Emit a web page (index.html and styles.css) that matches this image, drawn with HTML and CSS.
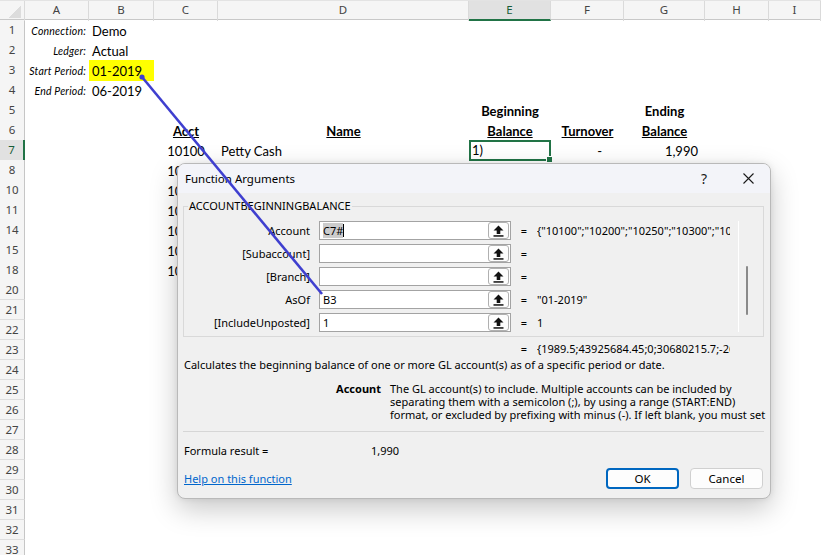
FILE: index.html
```html
<!DOCTYPE html>
<html lang="en">
<head>
    <meta charset="UTF-8">
    <title>Function Arguments</title>
    <link rel="stylesheet" href="styles.css">
</head>
<body>
    <div class="sheet">
        <div class="row colhead">
            <div class="corner"><span></span></div>
            <div class="ch">A</div>
            <div class="ch">B</div>
            <div class="ch">C</div>
            <div class="ch">D</div>
            <div class="ch on">E</div>
            <div class="ch">F</div>
            <div class="ch">G</div>
            <div class="ch">H</div>
            <div class="ch">I</div>
        </div>
        <div class="row"><div class="rh">1</div><div class="cell a lbl">Connection:</div><div class="cell b">Demo</div></div>
        <div class="row"><div class="rh">2</div><div class="cell a lbl">Ledger:</div><div class="cell b">Actual</div></div>
        <div class="row"><div class="rh">3</div><div class="cell a lbl">Start Period:</div><div class="cell b hl">01-2019</div></div>
        <div class="row"><div class="rh">4</div><div class="cell a lbl">End Period:</div><div class="cell b">06-2019</div></div>
        <div class="row"><div class="rh">5</div><div class="cell e hd">Beginning</div><div class="cell g hd">Ending</div></div>
        <div class="row">
            <div class="rh">6</div>
            <div class="cell c hd"><u>Acct</u></div>
            <div class="cell d hd"><u>Name</u></div>
            <div class="cell e hd"><u>Balance</u></div>
            <div class="cell f hd"><u>Turnover</u></div>
            <div class="cell g hd"><u>Balance</u></div>
        </div>
        <div class="row">
            <div class="rh on">7</div>
            <div class="cell c mid">10100</div>
            <div class="cell d">Petty Cash</div>
            <div class="cell e active">1)</div>
            <div class="cell f dash">-</div>
            <div class="cell g num">1,990</div>
        </div>
        <div class="row"><div class="rh">8</div><div class="cell c mid">10200</div></div>
        <div class="row"><div class="rh">10</div><div class="cell c mid">10250</div></div>
        <div class="row"><div class="rh">11</div><div class="cell c mid">10300</div></div>
        <div class="row"><div class="rh">14</div><div class="cell c mid">10400</div></div>
        <div class="row"><div class="rh">15</div><div class="cell c mid">10500</div></div>
        <div class="row"><div class="rh">18</div><div class="cell c mid">10600</div></div>
        <div class="row"><div class="rh">20</div></div>
        <div class="row"><div class="rh">21</div></div>
        <div class="row"><div class="rh">22</div></div>
        <div class="row"><div class="rh">23</div></div>
        <div class="row"><div class="rh">24</div></div>
        <div class="row"><div class="rh">25</div></div>
        <div class="row"><div class="rh">26</div></div>
        <div class="row"><div class="rh">27</div></div>
        <div class="row"><div class="rh">28</div></div>
        <div class="row"><div class="rh">29</div></div>
        <div class="row"><div class="rh">30</div></div>
        <div class="row"><div class="rh">31</div></div>
        <div class="row"><div class="rh">32</div></div>
        <div class="row"><div class="rh">33</div></div>
    </div>

    <div class="dialog">
        <div class="titlebar">
            <span class="title">Function Arguments</span>
            <span class="tb-btn help-q">?</span>
            <span class="tb-btn">
                <svg width="11" height="11" viewBox="0 0 11 11"><path d="M0.5 0.5L10.5 10.5M10.5 0.5L0.5 10.5" stroke="#1a1a1a" stroke-width="1.1" fill="none"/></svg>
            </span>
        </div>
        <div class="dlg-body">
            <fieldset class="group">
                <legend>ACCOUNTBEGINNINGBALANCE</legend>
                <div class="args">
                    <label>Account</label>
                    <div class="field"><span class="sel">C7#</span><span class="caret"></span><span class="ref"><svg width="11" height="12" viewBox="0 0 11 12"><path d="M5.5 0.5L10.5 5.5H7.3V9H3.7V5.5H0.5Z" fill="#111"/><rect x="0.5" y="10.2" width="10" height="1.5" fill="#111"/></svg></span></div>
                    <span class="eq">=</span>
                    <span class="val">{"10100";"10200";"10250";"10300";"10400";"10500";"10600"}</span>

                    <label>[Subaccount]</label>
                    <div class="field"><span class="ref"><svg width="11" height="12" viewBox="0 0 11 12"><path d="M5.5 0.5L10.5 5.5H7.3V9H3.7V5.5H0.5Z" fill="#111"/><rect x="0.5" y="10.2" width="10" height="1.5" fill="#111"/></svg></span></div>
                    <span class="eq">=</span>
                    <span class="val"></span>

                    <label>[Branch]</label>
                    <div class="field"><span class="ref"><svg width="11" height="12" viewBox="0 0 11 12"><path d="M5.5 0.5L10.5 5.5H7.3V9H3.7V5.5H0.5Z" fill="#111"/><rect x="0.5" y="10.2" width="10" height="1.5" fill="#111"/></svg></span></div>
                    <span class="eq">=</span>
                    <span class="val"></span>

                    <label>AsOf</label>
                    <div class="field"><span>B3</span><span class="ref"><svg width="11" height="12" viewBox="0 0 11 12"><path d="M5.5 0.5L10.5 5.5H7.3V9H3.7V5.5H0.5Z" fill="#111"/><rect x="0.5" y="10.2" width="10" height="1.5" fill="#111"/></svg></span></div>
                    <span class="eq">=</span>
                    <span class="val">"01-2019"</span>

                    <label>[IncludeUnposted]</label>
                    <div class="field"><span>1</span><span class="ref"><svg width="11" height="12" viewBox="0 0 11 12"><path d="M5.5 0.5L10.5 5.5H7.3V9H3.7V5.5H0.5Z" fill="#111"/><rect x="0.5" y="10.2" width="10" height="1.5" fill="#111"/></svg></span></div>
                    <span class="eq">=</span>
                    <span class="val">1</span>
                </div>
                <div class="scroll"><div class="thumb"></div></div>
            </fieldset>

            <div class="result">
                <span class="eq">=</span>
                <span class="val">{1989.5;43925684.45;0;30680215.7;-2635}</span>
            </div>
            <p class="desc">Calculates the beginning balance of one or more GL account(s) as of a specific period or date.</p>
            <div class="arg-help">
                <b>Account</b>
                <p>The GL account(s) to include. Multiple accounts can be included by<br>separating them with a semicolon (;), by using a range (START:END)<br>format, or excluded by prefixing with minus (-). If left blank, you must set</p>
            </div>
            <div class="formula">
                <span>Formula result =</span>
                <span>1,990</span>
            </div>
            <div class="footer">
                <a href="#" class="help-link">Help on this function</a>
                <button class="btn ok">OK</button>
                <button class="btn">Cancel</button>
            </div>
        </div>
    </div>

    <svg class="tracer" width="821" height="555" viewBox="0 0 821 555">
        <circle cx="142" cy="77" r="2.6" fill="#3f3fcf"/>
        <line x1="142" y1="77" x2="322" y2="294" stroke="#3f3fcf" stroke-width="2.6"/>
    </svg>
</body>
</html>
```

FILE: styles.css
```css
/* Sheet */
* {
    box-sizing: border-box;
}

body {
    margin: 0;
    width: 821px;
    height: 555px;
    overflow: hidden;
    position: relative;
    background: #fff;
    color: #000;
    font-family: Lato, "Liberation Sans", sans-serif;
}

.row {
    display: grid;
    grid-template-columns: 25px 64px 65px 64px 251px 82px 73px 81px 64px 1fr;
    height: 20px;
    font-size: 13px;
}

.colhead {
    background: #f5f5f5;
    border-top: 1px solid #e3e3e3;
    border-bottom: 1px solid #c8c8c8;
}

.corner {
    position: relative;
    border-right: 1px solid #dadada;
}

.corner span {
    position: absolute;
    right: 3px;
    bottom: 3px;
    width: 12px;
    height: 12px;
    background: linear-gradient(to bottom right, transparent 50%, #dcdcdc 50%);
}

.ch {
    text-align: center;
    font: 11.5px "Noto Sans", sans-serif;
    line-height: 18px;
    color: #444;
    border-right: 1px solid #dadada;
}

.ch.on {
    background: #e1e1e1;
    color: #185c37;
    border-bottom: 2px solid #217346;
}

.rh {
    grid-column: 1;
    background: #f5f5f5;
    border-right: 1px solid #c6c6c6;
    border-bottom: 1px solid #dedede;
    font: 11.5px "Noto Sans", sans-serif;
    line-height: 19px;
    color: #444;
    text-align: center;
}

.rh.on {
    background: #e1e1e1;
    color: #185c37;
    border-right: 2px solid #217346;
}

.cell {
    padding: 1px 3px 0;
    line-height: 20px;
    white-space: nowrap;
}

.a { grid-column: 2; }
.b { grid-column: 3; }
.c { grid-column: 4; }
.d { grid-column: 5; }
.e { grid-column: 6; }
.f { grid-column: 7; }
.g { grid-column: 8; }

.lbl {
    font-style: italic;
    font-size: 10.5px;
    text-align: right;
    letter-spacing: 0.2px;
}

.hl {
    background: #ffff00;
}

.hd {
    font-weight: bold;
    text-align: center;
}

.mid {
    text-align: center;
}

.dash {
    text-align: right;
    padding-right: 22px;
}

.num {
    text-align: right;
    padding-right: 7px;
}

.active {
    position: relative;
    border: 2px solid #217346;
    padding: 0 1px;
    line-height: 16px;
}

.active::after {
    content: "";
    position: absolute;
    right: -4px;
    bottom: -4px;
    width: 5px;
    height: 5px;
    background: #217346;
    border: 1px solid #fff;
}

/* Dialog */
.dialog {
    position: absolute;
    left: 177px;
    top: 163px;
    width: 594px;
    height: 336px;
    background: #f0f0f0;
    border: 1px solid #b9b9b9;
    border-radius: 8px;
    box-shadow: 0 10px 28px rgba(0, 0, 0, 0.22), 0 0 6px rgba(0, 0, 0, 0.08);
    font: 11px "Noto Sans", sans-serif;
    color: #000;
    overflow: hidden;
}

.titlebar {
    display: flex;
    align-items: center;
    height: 29px;
    padding-left: 7px;
    background: #f3f4f9;
    font-size: 11.5px;
}

.title {
    flex: 1;
}

.tb-btn {
    width: 44px;
    height: 29px;
    display: flex;
    align-items: center;
    justify-content: center;
}

.help-q {
    font-size: 14px;
    color: #1a1a1a;
}

.dlg-body {
    padding: 5px 6px 0 5px;
}

.group {
    display: flex;
    margin: 0;
    padding: 7px 0 4px 0;
    min-width: 0;
    border: 1px solid #d9d9d9;
}

.group legend {
    margin-left: 4px;
    padding: 0 1px;
    line-height: 16px;
}

.args {
    display: grid;
    grid-template-columns: 135px 192px 26px 193px;
    grid-auto-rows: 19px;
    row-gap: 4px;
    align-items: center;
}

.args label {
    text-align: right;
    padding-right: 9px;
}

.field {
    display: flex;
    align-items: center;
    height: 19px;
    padding-left: 3px;
    background: #fff;
    border: 1px solid #a3a3a3;
}

.sel {
    background: #cccccc;
}

.caret {
    width: 1px;
    height: 13px;
    background: #000;
}

.ref {
    display: flex;
    align-items: center;
    justify-content: center;
    margin-left: auto;
    margin-right: 1px;
    width: 21px;
    height: 17px;
    background: #fdfdfd;
    border: 1px solid #b0b0b0;
    border-radius: 3px;
}

.eq {
    text-align: center;
}

.val {
    overflow: hidden;
    white-space: nowrap;
}

.scroll {
    flex: 1;
    margin-left: 8px;
    border-left: 1px solid #fff;
}

.thumb {
    width: 2px;
    height: 49px;
    margin: 45px 0 0 7px;
    background: #8a8a8a;
    border-radius: 1px;
}

.result {
    display: grid;
    grid-template-columns: 26px 193px;
    margin-top: 4px;
    padding-left: 328px;
    line-height: 16px;
}

.desc {
    margin: 0;
    padding-left: 1px;
    line-height: 16px;
}

.arg-help {
    display: grid;
    grid-template-columns: 198px 373px;
    column-gap: 9px;
    margin-top: 9px;
    line-height: 13px;
}

.arg-help b {
    text-align: right;
}

.arg-help p {
    margin: 0;
    white-space: nowrap;
}

.formula {
    display: grid;
    grid-template-columns: 187px 1fr;
    margin-top: 10px;
    padding: 11px 0 0 1px;
    border-top: 1px solid #d6d6d6;
    line-height: 16px;
}

.footer {
    display: flex;
    align-items: center;
    gap: 11px;
    margin-top: 9px;
    height: 21px;
    padding-left: 1px;
    padding-right: 1px;
}

.help-link {
    flex: 1;
    color: #0066cc;
}

.btn {
    width: 73px;
    height: 21px;
    font: 11.5px "Noto Sans", sans-serif;
    color: #000;
    background: #fdfdfd;
    border: 1px solid #d0d0d0;
    border-radius: 4px;
}

.btn.ok {
    border: 2px solid #0067c0;
}

.tracer {
    position: absolute;
    left: 0;
    top: 0;
    pointer-events: none;
}
```
